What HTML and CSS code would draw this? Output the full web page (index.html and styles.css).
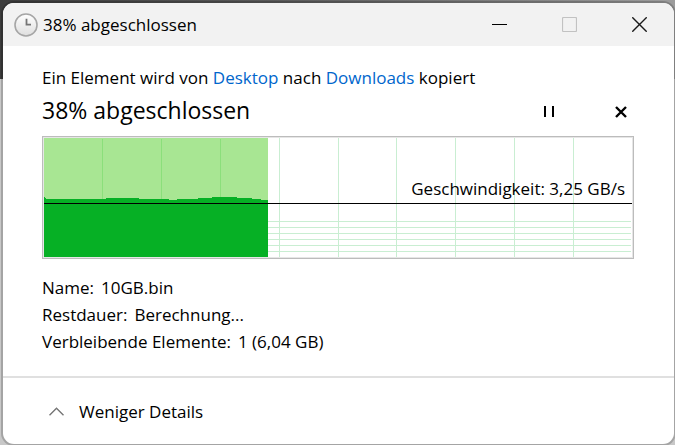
FILE: index.html
```html
<!DOCTYPE html>
<html lang="de">
<head>
  <meta charset="UTF-8">
  <meta name="viewport" content="width=device-width, initial-scale=1.0">
  <title>38% abgeschlossen</title>
  <link rel="stylesheet" href="styles.css">
</head>
<body>
  <div class="window">
    <!-- Title bar -->
    <header class="titlebar">
      <svg class="clock" viewBox="0 0 24 24" aria-hidden="true">
        <defs>
          <linearGradient id="face" x1="0" y1="0" x2="0" y2="1">
            <stop offset="0" stop-color="#ffffff"/>
            <stop offset="1" stop-color="#dedede"/>
          </linearGradient>
        </defs>
        <circle cx="12" cy="12" r="11" fill="url(#face)" stroke="#a6a6a6" stroke-width="1.6"/>
        <path d="M12.5 5.7v6h4.500" fill="none" stroke="#757575" stroke-width="1.8"/>
      </svg>
      <span class="title">38% abgeschlossen</span>
      <div class="window-buttons">
        <button type="button" aria-label="Minimieren">
          <svg viewBox="0 0 15 15"><path d="M0 7.5h15" stroke="#000"/></svg>
        </button>
        <button type="button" aria-label="Maximieren" disabled>
          <svg viewBox="0 0 15 15"><rect x=".5" y=".5" width="14" height="14" rx="1" fill="none" stroke="#c2c2c2" stroke-width="1.2"/></svg>
        </button>
        <button type="button" aria-label="Schließen">
          <svg viewBox="0 0 15 15"><path d="M.3.3l14.4 14.4M14.7.3L.3 14.7" stroke="#1a1a1a" stroke-width="1.4"/></svg>
        </button>
      </div>
    </header>

    <main class="content">
      <p class="summary">Ein Element wird von <a href="#desktop">Desktop</a> nach <a href="#downloads">Downloads</a> kopiert</p>
      <div class="status">
        <h1>38% abgeschlossen</h1>
        <button type="button" aria-label="Anhalten">
          <svg viewBox="0 0 12 12"><path d="M1 0h2v11H1zM9 0h2v11H9z"/></svg>
        </button>
        <button type="button" aria-label="Abbrechen">
          <svg viewBox="0 0 12 12"><path d="M1 1l10 10M11 1L1 11" stroke="#000" stroke-width="2.4"/></svg>
        </button>
      </div>

      <!-- Speed chart -->
      <div class="chart">
        <svg viewBox="0 0 588 119" preserveAspectRatio="none" shape-rendering="crispEdges" aria-hidden="true">
          <path class="grid" d="M0 83.5h587M0 89.5h587M0 95.5h587M0 101.5h587M0 107.5h587M0 113.5h587"/>
          <path class="grid" d="M235.5 0v119M294.5 0v119M352.5 0v119M411.5 0v119M470.5 0v119M529.5 0v119"/>
          <rect class="done" width="224" height="119"/>
          <path class="done-grid" d="M58.5 1v118M117.5 1v118M176.5 1v118"/>
          <path class="speed" d="M0 119V59h1v1h1v1h60v-1h33v1h30v1h8v-1h21v-1h14v-1h25v1h15v1h9v1h7v57z"/>
          <path class="current" d="M0 65.5h588"/>
        </svg>
        <span class="speed-label">Geschwindigkeit: 3,25 GB/s</span>
      </div>

      <dl class="details">
        <div><dt>Name:</dt><dd>10GB.bin</dd></div>
        <div><dt>Restdauer:</dt><dd>Berechnung...</dd></div>
        <div><dt>Verbleibende Elemente:</dt><dd>1 (6,04 GB)</dd></div>
      </dl>
    </main>

    <footer class="footer">
      <button type="button">
        <svg viewBox="0 0 15 9" aria-hidden="true"><path d="M.5 8.3l7-7 7 7" fill="none" stroke="#767676" stroke-width="1.4"/></svg>
        Weniger Details
      </button>
    </footer>
  </div>
</body>
</html>
```
FILE: styles.css
```css
* {
  box-sizing: border-box;
}

body {
  margin: 0;
  min-height: 100vh;
  padding: 3px 1px 1px 3px;
  display: flex;
  font-family: "Segoe UI", "Open Sans", "Noto Sans", sans-serif;
  font-size: 17px;
  line-height: 27px;
  color: #000;
  background:
    linear-gradient(90deg, #3c3c3c, #5a5a5a 40%, #9c9c9c) top / 100% 79px no-repeat,
    #c8c8c8;
}

button {
  border: 0;
  padding: 0;
  background: none;
  font: inherit;
  color: inherit;
}

svg {
  display: block;
}

.window {
  flex: 1;
  display: flex;
  flex-direction: column;
  border-radius: 11px;
  overflow: hidden;
  background: #fff;
  box-shadow: 0 0 0 2px rgba(0, 0, 0, .18);
}

/* Title bar */
.titlebar {
  display: flex;
  align-items: center;
  height: 43px;
  padding-left: 11px;
  background: #f2f2f2;
}

.clock {
  width: 24px;
  height: 24px;
  margin-right: 5px;
}

.title {
  flex: 1;
}

.window-buttons {
  display: flex;
}

.window-buttons button {
  width: 70px;
  height: 43px;
  display: flex;
  align-items: center;
  justify-content: center;
}

.window-buttons svg {
  width: 15px;
  height: 15px;
}

/* Content */
.content {
  flex: 1;
  padding: 18px 40px 20px 39px;
}

.summary {
  margin: 0;
}

.summary a {
  color: #0066cc;
  text-decoration: none;
}

.status {
  display: flex;
  align-items: center;
  height: 38px;
  margin-bottom: 7px;
  padding-right: 1px;
}

.status h1 {
  flex: 1;
  margin: 0;
  font-size: 23px;
  font-weight: 400;
  line-height: 32px;
}

.status button {
  width: 24px;
  height: 24px;
  margin: 4px 0 0 48px;
  display: flex;
  align-items: center;
  justify-content: center;
}

.status svg {
  width: 12px;
  height: 12px;
}

/* Speed chart */
.chart {
  position: relative;
  height: 123px;
  border: 1px solid #bcbcbc;
  padding: 1px;
  background: #e6e6e6;
}

.chart svg {
  width: 100%;
  height: 100%;
  background: #fff;
}

.grid {
  stroke: #c9eed2;
}

.done {
  fill: #a8e693;
}

.done-grid {
  stroke: #8bdf7b;
}

.speed {
  fill: #06b025;
}

.current {
  stroke: #000;
}

.speed-label {
  position: absolute;
  right: 8px;
  bottom: 56px;
}

/* Details */
.details {
  margin: 15px 0 0;
}

.details div {
  display: flex;
  gap: 7px;
}

.details dd {
  margin: 0;
}

/* Footer */
.footer {
  height: 68px;
  padding-left: 46px;
  display: flex;
  align-items: center;
  border-top: 2px solid #e0e0e0;
}

.footer button {
  display: flex;
  align-items: center;
  gap: 15px;
}

.footer svg {
  width: 15px;
  height: 9px;
}
```
